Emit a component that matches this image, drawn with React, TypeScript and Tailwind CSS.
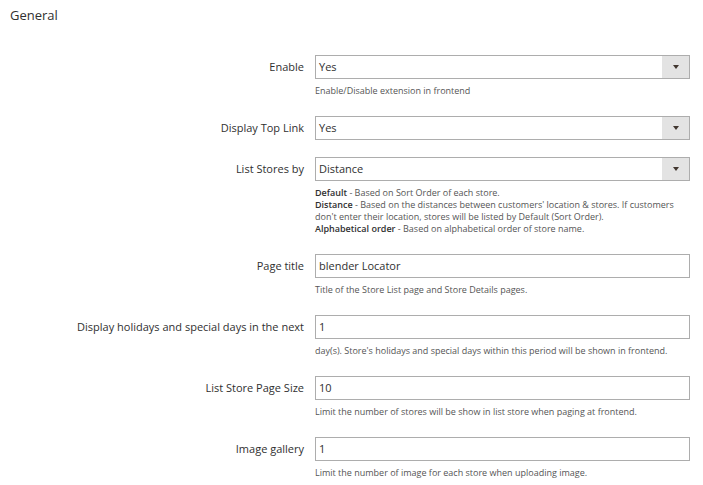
import { ReactNode } from 'react';

interface FieldProps {
  label: string;
  value: string;
  select?: boolean;
  note?: ReactNode;
}

function Field({ label, value, select, note }: FieldProps) {
  return (
    <div className={`flex ${note ? 'mb-[19px]' : 'mb-[17px]'}`}>
      <div className="w-[304px] shrink-0 text-right text-[11px] leading-[24px] text-[#303030]">
        {label}
      </div>
      <div className="ml-[11px] w-[375px]">
        {select ? (
          <div className="flex h-[24px] border border-[#adadad] bg-white">
            <div className="flex-1 pl-[3px] text-[11px] leading-[22px] text-[#303030]">{value}</div>
            <div className="flex w-[27px] items-center justify-center bg-[#e3e3e3]">
              <div className="h-0 w-0 border-x-[3px] border-t-[4px] border-x-transparent border-t-[#41362f]" />
            </div>
          </div>
        ) : (
          <div className="h-[24px] border border-[#adadad] bg-white pl-[3px] text-[11px] leading-[22px] text-[#303030]">
            {value}
          </div>
        )}
        {note && <div className="mt-[6px] w-[364px] text-[9px] leading-[12px] text-[#555]">{note}</div>}
      </div>
    </div>
  );
}

export default function App() {
  return (
    <div className="h-[485px] w-[703px] bg-white font-['Open_Sans',sans-serif]">
      <div className="pl-[10px] pt-[6px] text-[13px] leading-[18px] text-[#303030]">General</div>
      <div className="pt-[31px]">
        <Field label="Enable" value="Yes" select note="Enable/Disable extension in frontend" />
        <Field label="Display Top Link" value="Yes" select />
        <Field
          label="List Stores by"
          value="Distance"
          select
          note={
            <>
              <div>
                <span className="font-semibold text-[#303030]">Default</span> - Based on Sort Order of each store.
              </div>
              <div>
                <span className="font-semibold text-[#303030]">Distance</span> - Based on the distances between
                customers' location &amp; stores. If customers don't enter their location, stores will be listed by
                Default (Sort Order).
              </div>
              <div>
                <span className="font-semibold text-[#303030]">Alphabetical order</span> - Based on alphabetical order
                of store name.
              </div>
            </>
          }
        />
        <Field label="Page title" value="blender Locator" note="Title of the Store List page and Store Details pages." />
        <Field
          label="Display holidays and special days in the next"
          value="1"
          note="day(s). Store's holidays and special days within this period will be shown in frontend."
        />
        <Field
          label="List Store Page Size"
          value="10"
          note="Limit the number of stores will be show in list store when paging at frontend."
        />
        <Field
          label="Image gallery"
          value="1"
          note="Limit the number of image for each store when uploading image."
        />
      </div>
    </div>
  );
}
